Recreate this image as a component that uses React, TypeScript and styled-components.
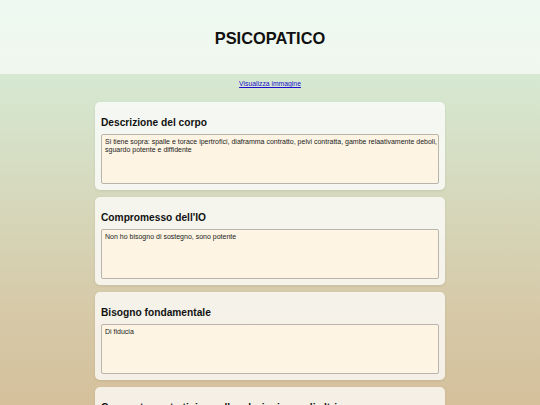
import React from 'react';
import styled, { createGlobalStyle } from 'styled-components';

const GlobalStyle = createGlobalStyle`
  html, body {
    margin: 0;
    padding: 0;
  }
  body {
    font-family: "Liberation Sans", Arial, sans-serif;
    background: linear-gradient(to bottom, #d7ecd6 0%, #d6e9d3 18%, #d6caa9 75%, #d5c09b 100%);
    background-attachment: fixed;
    min-height: 100vh;
  }
`;

const Header = styled.header`
  height: 74px;
  display: flex;
  align-items: center;
  justify-content: center;
  background: linear-gradient(to bottom, #edfaf1, #f1f7ef);
`;

const Title = styled.h1`
  margin: 0;
  font-size: 16.4px;
  font-weight: bold;
  color: #111;
  padding-top: 2px;
`;

const Main = styled.main`
  display: flex;
  flex-direction: column;
  align-items: center;
  padding-top: 6px;
`;

const ImageLink = styled.a`
  font-size: 6.8px;
  line-height: 8px;
  color: #1a0dcc;
  text-decoration: underline;
  margin-bottom: 14px;
`;

const Cards = styled.div`
  width: 350px;
  display: flex;
  flex-direction: column;
  gap: 7px;
`;

const Card = styled.section`
  background: rgba(255, 255, 255, 0.75);
  border-radius: 5px;
  box-shadow: 0 1px 3px rgba(0, 0, 0, 0.08);
  padding: 6px;
`;

const Heading = styled.h2`
  margin: 9px 0 5px;
  font-size: 10.2px;
  line-height: 12px;
  font-weight: bold;
  color: #111;
`;

const Field = styled.textarea`
  display: block;
  box-sizing: border-box;
  width: 100%;
  height: 50px;
  margin: 0;
  padding: 3px 0 3px 3px;
  border: 1px solid #b9b5ad;
  border-radius: 2px;
  background: #fdf4e4;
  font-family: "Liberation Sans", Arial, sans-serif;
  font-size: 7px;
  line-height: 8px;
  color: #222;
  resize: none;
  overflow: hidden;
  outline: none;
`;

const sections = [
  {
    title: 'Descrizione del corpo',
    text: 'Si tiene sopra: spalle e torace ipertrofici, diaframma contratto, pelvi contratta, gambe relaativamente deboli, sguardo potente e diffidente',
  },
  { title: "Compromesso dell'IO", text: 'Non ho bisogno di sostegno, sono potente' },
  { title: 'Bisogno fondamentale', text: 'Di fiducia' },
  { title: 'Comportamento tipico nelle relazioni con gli altri', text: '' },
];

export default function App() {
  return (
    <>
      <GlobalStyle />
      <Header>
        <Title>PSICOPATICO</Title>
      </Header>
      <Main>
        <ImageLink href="#">Visualizza immagine</ImageLink>
        <Cards>
          {sections.map((s) => (
            <Card key={s.title}>
              <Heading>{s.title}</Heading>
              <Field readOnly value={s.text} />
            </Card>
          ))}
        </Cards>
      </Main>
    </>
  );
}
